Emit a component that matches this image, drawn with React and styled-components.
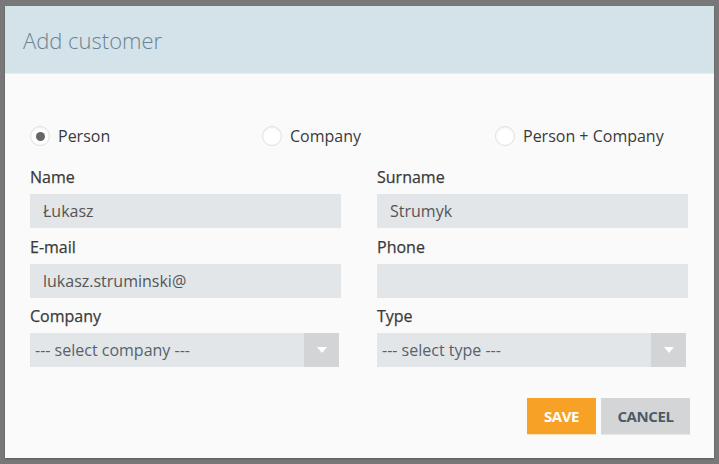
import React from 'react'
import styled, { createGlobalStyle } from 'styled-components'

const GlobalStyle = createGlobalStyle`
  html, body {
    margin: 0;
    padding: 0;
    background: #787878;
    font-family: "Open Sans", "Liberation Sans", sans-serif;
  }
  * { box-sizing: border-box; }
`;

function Radio({ label, checked }) {
  return (
    <RadioLabel>
      <RadioCircle checked={checked} />
      {label}
    </RadioLabel>
  )
}

function Field({ label, value }) {
  return (
    <FieldBox>
      <Label>{label}</Label>
      <Input defaultValue={value} />
    </FieldBox>
  )
}

function SelectField({ label, placeholder }) {
  return (
    <FieldBox>
      <Label>{label}</Label>
      <Select>
        <SelectText>{placeholder}</SelectText>
        <SelectArrow>
          <svg width="10" height="6" viewBox="0 0 10 6">
            <path d="M0 0 L10 0 L5 6 Z" fill="#fff" />
          </svg>
        </SelectArrow>
      </Select>
    </FieldBox>
  )
}

export default function App() {
  return (
    <Page>
      <GlobalStyle />
      <Modal>
        <Header>
          <Title>Add customer</Title>
        </Header>
        <Body>
          <RadioRow>
            <Radio label="Person" checked />
            <Radio label="Company" />
            <Radio label="Person + Company" />
          </RadioRow>
          <FormGrid>
            <Field label="Name" value="Łukasz" />
            <Field label="Surname" value="Strumyk" />
            <Field label="E-mail" value="lukasz.struminski@" />
            <Field label="Phone" value="" />
            <SelectField label="Company" placeholder="--- select company ---" />
            <SelectField label="Type" placeholder="--- select type ---" />
          </FormGrid>
          <Actions>
            <Button primary>Save</Button>
            <Button>Cancel</Button>
          </Actions>
        </Body>
      </Modal>
    </Page>
  )
}

const Page = styled.div`
  width: 719px;
  height: 464px;
  padding: 6px 5px 0 5px;
  overflow: hidden;
`;

const Modal = styled.div`
  width: 709px;
  height: 452px;
  background: #fafafa;
  box-shadow: 0 1px 2px rgba(0, 0, 0, 0.25);
  display: flex;
  flex-direction: column;
`;

const Header = styled.div`
  height: 68px;
  background: #d4e2ea;
  border-bottom: 1px solid #e6eef3;
  display: flex;
  align-items: center;
  padding: 0 18px;
`;

const Title = styled.h1`
  margin: 1px 0 0 0;
  font-size: 22px;
  font-weight: 300;
  color: #6c8292;
  line-height: 1;
`;

const Body = styled.div`
  padding: 52px 25px 0 25px;
`;

const RadioRow = styled.div`
  display: grid;
  grid-template-columns: 232px 233px auto;
  height: 20px;
  margin-bottom: 21px;
`;

const RadioLabel = styled.label`
  display: flex;
  align-items: center;
  gap: 8px;
  font-size: 16px;
  color: #3a3a3a;
  line-height: 20px;
`;

const RadioCircle = styled.span`
  width: 20px;
  height: 20px;
  border-radius: 50%;
  border: 1px solid #e0e0e0;
  background: #fff;
  box-shadow: inset 0 1px 2px rgba(0, 0, 0, 0.06);
  display: flex;
  align-items: center;
  justify-content: center;

  &::after {
    content: '';
    width: 9px;
    height: 9px;
    border-radius: 50%;
    background: ${p => (p.checked ? '#666' : 'transparent')};
  }
`;

const FormGrid = styled.div`
  display: grid;
  grid-template-columns: 311px 311px;
  column-gap: 36px;
  row-gap: 8.5px;
`;

const FieldBox = styled.div`
  display: flex;
  flex-direction: column;
`;

const Label = styled.div`
  font-size: 16px;
  font-weight: 400;
  -webkit-text-stroke: 0.25px #3a3a3a;
  color: #3a3a3a;
  line-height: 20px;
  margin-bottom: 7px;
`;

const Input = styled.input`
  height: 34px;
  border: none;
  background: #e3e6e8;
  padding: 0 13px;
  font-family: inherit;
  font-size: 16px;
  color: #555;
  outline: none;
`;

const Select = styled.div`
  height: 34px;
  width: calc(100% - 2px);
  background: #e3e6e8;
  display: flex;
  align-items: center;
`;

const SelectText = styled.span`
  flex: 1;
  padding-left: 5px;
  font-size: 16px;
  color: #56626b;
`;

const SelectArrow = styled.span`
  width: 35px;
  height: 100%;
  background: #d2d4d6;
  display: flex;
  align-items: center;
  justify-content: center;
`;

const Actions = styled.div`
  display: flex;
  justify-content: flex-end;
  gap: 5px;
  margin-top: 31px;
  margin-right: -1px;
`;

const Button = styled.button`
  height: 36px;
  width: ${p => (p.primary ? '69px' : '89px')};
  padding: 0;
  border: none;
  font-family: inherit;
  font-size: 15px;
  letter-spacing: -0.4px;
  font-weight: 700;
  text-transform: uppercase;
  background: ${p => (p.primary ? '#f7a126' : '#d3d5d7')};
  color: ${p => (p.primary ? '#fff' : '#4d5b66')};
  box-shadow: 0 1px 0 ${p => (p.primary ? '#fbe3c0' : '#e8e9ea')};
`;
